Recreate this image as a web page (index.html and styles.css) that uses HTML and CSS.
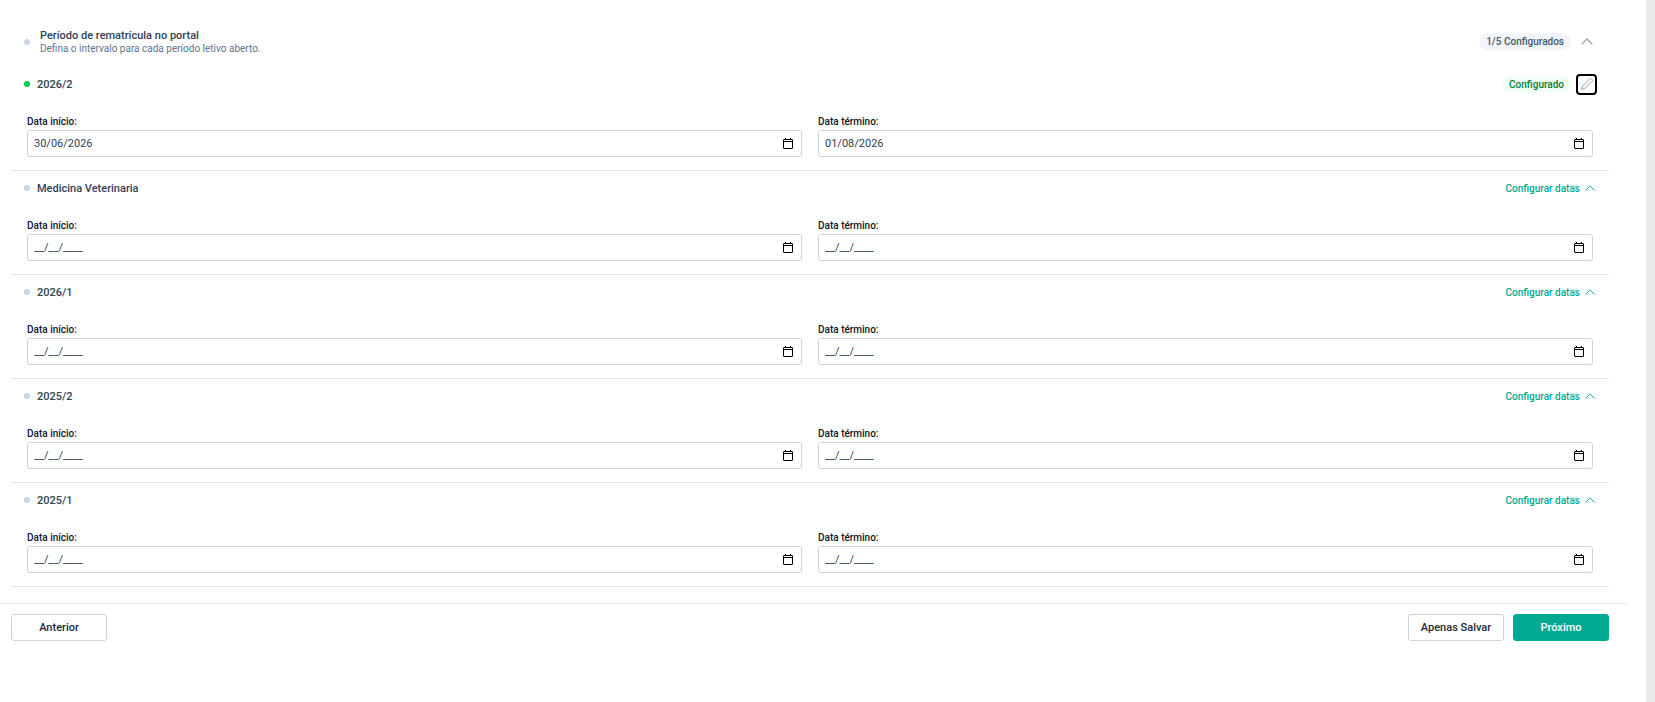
FILE: index.html
```html
<!DOCTYPE html>
<html lang="pt-BR">
  <head>
    <meta charset="UTF-8" />
    <meta name="viewport" content="width=device-width, initial-scale=1.0" />
    <title>Período de rematrícula</title>
    <link rel="stylesheet" href="styles.css">
  </head>
  <body>
    <svg width="0" height="0" class="sprite" aria-hidden="true">
      <symbol id="icon-up" viewBox="0 0 12 7">
        <path d="M1 6l5-5 5 5" fill="none" stroke="currentColor" stroke-width="1.1" stroke-linecap="round" stroke-linejoin="round" />
      </symbol>
      <symbol id="icon-calendar" viewBox="0 0 10 11">
        <path d="M1 1.5h8a.5.5 0 0 1 .5.5v8a.5.5 0 0 1-.5.5H1a.5.5 0 0 1-.5-.5V2a.5.5 0 0 1 .5-.5z" fill="none" stroke="currentColor" />
        <path d="M0 3h10v1H0zM2 0h1v2H2zM7 0h1v2H7z" fill="currentColor" />
      </symbol>
      <symbol id="icon-pencil" viewBox="0 0 12 12">
        <path d="M.6 11.4l.9-3.3 7.2-7.2a1.2 1.2 0 0 1 1.7 0l.7.7a1.2 1.2 0 0 1 0 1.7l-7.2 7.2z" fill="none" stroke="currentColor" stroke-linejoin="round" />
      </symbol>
    </svg>
    <div class="page">
      <main class="content">
        <header class="header">
          <span class="dot"></span>
          <div class="heading">
            <h1>Período de rematrícula no portal</h1>
            <p>Defina o intervalo para cada período letivo aberto.</p>
          </div>
          <span class="badge">1/5 Configurados</span>
          <button type="button" class="icon-button" aria-label="Recolher"><svg class="chevron"><use href="#icon-up" /></svg></button>
        </header>

        <section class="period">
          <div class="period-title">
            <span class="dot dot-done"></span>
            <h2>2026/2</h2>
            <span class="badge badge-done">Configurado</span>
            <button type="button" class="icon-button icon-button-active" aria-label="Editar"><svg class="pencil"><use href="#icon-pencil" /></svg></button>
          </div>
          <div class="fields">
            <div class="field">
              <label for="start-1">Data início:</label>
              <div class="date-box">
                <input id="start-1" type="text" value="30/06/2026" />
                <button type="button" aria-label="Abrir calendário"><svg class="calendar"><use href="#icon-calendar" /></svg></button>
              </div>
            </div>
            <div class="field">
              <label for="end-1">Data término:</label>
              <div class="date-box">
                <input id="end-1" type="text" value="01/08/2026" />
                <button type="button" aria-label="Abrir calendário"><svg class="calendar"><use href="#icon-calendar" /></svg></button>
              </div>
            </div>
          </div>
        </section>

        <section class="period">
          <div class="period-title">
            <span class="dot"></span>
            <h2>Medicina Veterinaria</h2>
            <button type="button" class="configure">Configurar datas <svg class="chevron-small"><use href="#icon-up" /></svg></button>
          </div>
          <div class="fields">
            <div class="field">
              <label for="start-2">Data início:</label>
              <div class="date-box">
                <input id="start-2" type="text" value="__/__/____" />
                <button type="button" aria-label="Abrir calendário"><svg class="calendar"><use href="#icon-calendar" /></svg></button>
              </div>
            </div>
            <div class="field">
              <label for="end-2">Data término:</label>
              <div class="date-box">
                <input id="end-2" type="text" value="__/__/____" />
                <button type="button" aria-label="Abrir calendário"><svg class="calendar"><use href="#icon-calendar" /></svg></button>
              </div>
            </div>
          </div>
        </section>

        <section class="period">
          <div class="period-title">
            <span class="dot"></span>
            <h2>2026/1</h2>
            <button type="button" class="configure">Configurar datas <svg class="chevron-small"><use href="#icon-up" /></svg></button>
          </div>
          <div class="fields">
            <div class="field">
              <label for="start-3">Data início:</label>
              <div class="date-box">
                <input id="start-3" type="text" value="__/__/____" />
                <button type="button" aria-label="Abrir calendário"><svg class="calendar"><use href="#icon-calendar" /></svg></button>
              </div>
            </div>
            <div class="field">
              <label for="end-3">Data término:</label>
              <div class="date-box">
                <input id="end-3" type="text" value="__/__/____" />
                <button type="button" aria-label="Abrir calendário"><svg class="calendar"><use href="#icon-calendar" /></svg></button>
              </div>
            </div>
          </div>
        </section>

        <section class="period">
          <div class="period-title">
            <span class="dot"></span>
            <h2>2025/2</h2>
            <button type="button" class="configure">Configurar datas <svg class="chevron-small"><use href="#icon-up" /></svg></button>
          </div>
          <div class="fields">
            <div class="field">
              <label for="start-4">Data início:</label>
              <div class="date-box">
                <input id="start-4" type="text" value="__/__/____" />
                <button type="button" aria-label="Abrir calendário"><svg class="calendar"><use href="#icon-calendar" /></svg></button>
              </div>
            </div>
            <div class="field">
              <label for="end-4">Data término:</label>
              <div class="date-box">
                <input id="end-4" type="text" value="__/__/____" />
                <button type="button" aria-label="Abrir calendário"><svg class="calendar"><use href="#icon-calendar" /></svg></button>
              </div>
            </div>
          </div>
        </section>

        <section class="period">
          <div class="period-title">
            <span class="dot"></span>
            <h2>2025/1</h2>
            <button type="button" class="configure">Configurar datas <svg class="chevron-small"><use href="#icon-up" /></svg></button>
          </div>
          <div class="fields">
            <div class="field">
              <label for="start-5">Data início:</label>
              <div class="date-box">
                <input id="start-5" type="text" value="__/__/____" />
                <button type="button" aria-label="Abrir calendário"><svg class="calendar"><use href="#icon-calendar" /></svg></button>
              </div>
            </div>
            <div class="field">
              <label for="end-5">Data término:</label>
              <div class="date-box">
                <input id="end-5" type="text" value="__/__/____" />
                <button type="button" aria-label="Abrir calendário"><svg class="calendar"><use href="#icon-calendar" /></svg></button>
              </div>
            </div>
          </div>
        </section>
      </main>

      <footer class="actions">
        <button type="button" class="button">Anterior</button>
        <button type="button" class="button button-save">Apenas Salvar</button>
        <button type="submit" class="button button-next">Próximo</button>
      </footer>
    </div>
  </body>
</html>
```

FILE: styles.css
```css
* {
  box-sizing: border-box;
}
body {
  margin: 0;
  background-color: #e9e9e9;
  color: #314158;
  font-family: Roboto, sans-serif;
  font-size: 11px;
}
h1,
h2,
p {
  margin: 0;
}
button,
input {
  font-family: inherit;
  color: inherit;
  padding: 0;
  border: none;
  background: none;
}
button {
  cursor: pointer;
}
svg {
  display: block;
}
.sprite {
  position: absolute;
}
.page {
  min-height: 100vh;
  margin-right: 9px;
  padding-right: 18px;
  background-color: #fff;
}
.content {
  padding: 28px 19px 16px 11px;
}
.header,
.period-title {
  display: flex;
  align-items: center;
  padding: 0 12px 0 13px;
}
.header {
  padding-bottom: 12px;
}
.heading {
  flex: 1;
  margin-left: 10px;
}
h1,
h2 {
  font-size: 11px;
  font-weight: 500;
  line-height: 15px;
}
h2 {
  flex: 1;
  margin-left: 7px;
}
.heading p {
  font-size: 10px;
  line-height: 12px;
  color: #62748e;
}
.dot {
  width: 6px;
  height: 6px;
  border-radius: 50%;
  background-color: #cad5e2;
}
.dot-done {
  background-color: #00c950;
}
.badge {
  padding: 0 7px;
  border-radius: 9px;
  background-color: #f1f5f9;
  color: #45556c;
  font-size: 10px;
  font-weight: 500;
  line-height: 17px;
}
.badge-done {
  background-color: #f0fdf4;
  color: #008236;
}
.icon-button {
  display: flex;
  align-items: center;
  justify-content: center;
  width: 21px;
  height: 21px;
  margin-left: 5px;
  border-radius: 4px;
  color: #90a1b9;
}
.icon-button-active {
  border: 2px solid #000;
}
.chevron {
  width: 12px;
  height: 7px;
}
.chevron-small {
  width: 10px;
  height: 6px;
}
.pencil {
  width: 12px;
  height: 12px;
}
.calendar {
  width: 10px;
  height: 11px;
}
.period {
  border-bottom: 1px solid #e2e8f0;
}
.period-title {
  height: 34px;
}
.configure {
  display: flex;
  align-items: center;
  gap: 5px;
  margin-right: 2px;
  color: #00a991;
  font-size: 10px;
  font-weight: 500;
}
.fields {
  display: flex;
  gap: 16px;
  padding: 14px 16px 13px;
}
.field {
  flex: 1;
}
.field label {
  display: block;
  margin-bottom: 2px;
  color: #0f172b;
  font-size: 10px;
  font-weight: 500;
  line-height: 13px;
}
.date-box {
  display: flex;
  align-items: center;
  height: 27px;
  padding: 0 8px 0 6px;
  border: 1px solid #cad5e2;
  border-radius: 3px;
}
.date-box input {
  flex: 1;
  min-width: 0;
  font-size: 11px;
  outline: none;
}
.date-box button {
  color: #000;
}
.actions {
  display: flex;
  gap: 9px;
  padding: 10px 19px 10px 11px;
  border-top: 1px solid #e2e8f0;
}
.button {
  min-width: 96px;
  height: 27px;
  padding: 0 10px;
  border: 1px solid #cad5e2;
  border-radius: 3px;
  background-color: #fff;
  color: #1d293d;
  font-size: 11px;
  font-weight: 500;
}
.button-save {
  margin-left: auto;
}
.button-next {
  border-color: #00a991;
  background-color: #00a991;
  color: #fff;
}
```
